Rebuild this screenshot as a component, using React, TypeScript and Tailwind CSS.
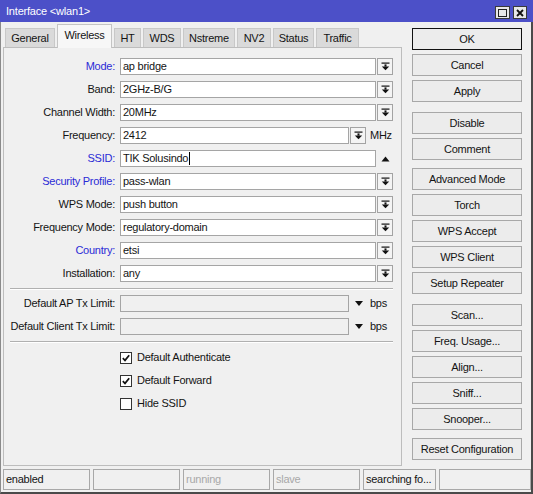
import React from 'react';

const blue = 'text-[#2b2bd6]';

const tabs: [string, number][] = [
    ['General', 50],
    ['Wireless', 55],
    ['HT', 27],
    ['WDS', 38],
    ['Nstreme', 52],
    ['NV2', 34],
    ['Status', 41],
    ['Traffic', 43],
];

function DropIcon() {
    return (
        <svg width="9" height="9" viewBox="0 0 9 9">
            <rect x="0.5" y="0.5" width="8" height="1.2" fill="#111" />
            <rect x="3.5" y="2.4" width="2" height="2.2" fill="#111" />
            <path d="M0.8 4.4H8.2L4.5 8.3Z" fill="#111" />
        </svg>
    );
}

function DropBtn() {
    return (
        <div className="ml-px w-[16px] h-[17px] border border-[#a3a3a3] bg-[#f4f4f4] flex items-center justify-center">
            <DropIcon />
        </div>
    );
}

function Row({ label, isBlue, children }: { label: string; isBlue?: boolean; children: React.ReactNode }) {
    return (
        <div className="flex items-center h-[17px]">
            <div className={`w-[112px] pr-px text-right whitespace-nowrap ${isBlue ? blue : ''}`}>{label}:</div>
            <div className="ml-[4px] flex items-center">{children}</div>
        </div>
    );
}

function Field({ value, w = 256, disabled, cursor }: { value?: string; w?: number; disabled?: boolean; cursor?: boolean }) {
    return (
        <div
            className={`h-[17px] border border-[#a5a5a5] pl-[2px] flex items-center whitespace-nowrap overflow-hidden ${disabled ? 'bg-[#f0f0f0]' : 'bg-white'}`}
            style={{ width: w }}
        >
            {value}
            {cursor && <span className="ml-px w-px h-[13px] bg-black" />}
        </div>
    );
}

function Check({ checked, label }: { checked?: boolean; label: string }) {
    return (
        <div className="flex items-center h-[17px] ml-[116px]">
            <div className="w-[12px] h-[12px] border border-[#333] bg-white flex items-center justify-center">
                {checked && (
                    <svg width="8" height="8" viewBox="0 0 8 8">
                        <path d="M0.8 4.2L3 6.4L7.2 1.2" stroke="#111" strokeWidth="1.7" fill="none" />
                    </svg>
                )}
            </div>
            <span className="ml-[5px]">{label}</span>
        </div>
    );
}

function Sep() {
    return <div className="ml-[6px] w-[383px] border-t border-[#b0b0b0] border-b border-b-white" />;
}

function Btn({ label, className = '', main }: { label: string; className?: string; main?: boolean }) {
    return (
        <div
            className={`w-[110px] h-[22px] flex items-center justify-center border bg-[#ececec] ${main ? 'border-[#111]' : 'border-[#a8a8a8]'} ${className}`}
        >
            {label}
        </div>
    );
}

export default function App() {
    return (
        <div className="w-[533px] h-[494px] flex flex-col bg-[#f0f0f0] text-[11px] tracking-[-0.25px] text-[#141414] font-['Liberation_Sans',Arial,sans-serif] leading-none">
            {/* Title bar */}
            <div className="h-[22px] bg-[#4c50c8] flex items-center pl-[6px] pr-[6px] text-white">
                <span className="tracking-[-0.2px]">Interface &lt;wlan1&gt;</span>
                <div className="ml-auto flex items-center gap-[3px] mt-[3px]">
                    <div className="w-[15px] h-[13px] bg-[#e8e8e8] border border-[#3a3a3a] flex items-center justify-center">
                        <div className="w-[9px] h-[8px] border border-[#222]" />
                    </div>
                    <div className="w-[14px] h-[13px] bg-[#e8e8e8] border border-[#3a3a3a] flex items-center justify-center">
                        <svg width="8" height="8" viewBox="0 0 8 8">
                            <path d="M1 1L7 7M7 1L1 7" stroke="#111" strokeWidth="1.8" />
                        </svg>
                    </div>
                </div>
            </div>

            <div className="flex-1 flex flex-col border-l border-l-[#8a8a8a] border-r-2 border-r-[#4a4a4a] border-b-2 border-b-[#4a4a4a]">
                <div className="flex h-[444px]">
                    {/* Left: tabs + panel */}
                    <div className="ml-[2px] w-[399px] flex flex-col">
                        <div className="h-[25px] flex items-end gap-[2px] pl-[2px] relative z-10">
                            {tabs.map(([t, w]) =>
                                t === 'Wireless' ? (
                                    <div
                                        key={t}
                                        className="h-[24px] -mb-px bg-[#f7f7f7] border border-b-0 border-[#c4c4c4] flex items-center justify-center pb-[2px]"
                                        style={{ width: w }}
                                    >
                                        {t}
                                    </div>
                                ) : (
                                    <div
                                        key={t}
                                        className="h-[19px] bg-[#dadada] border border-b-0 border-[#c8c8c8] flex items-center justify-center pt-px"
                                        style={{ width: w }}
                                    >
                                        {t}
                                    </div>
                                )
                            )}
                        </div>
                        <div className="h-[419px] border border-[#bdbdbd] bg-[#f0f0f0] pt-[10px] flex flex-col">
                            <div className="flex flex-col gap-[6px]">
                                <Row label="Mode" isBlue>
                                    <Field value="ap bridge" />
                                    <DropBtn />
                                </Row>
                                <Row label="Band">
                                    <Field value="2GHz-B/G" />
                                    <DropBtn />
                                </Row>
                                <Row label="Channel Width">
                                    <Field value="20MHz" />
                                    <DropBtn />
                                </Row>
                                <Row label="Frequency">
                                    <Field value="2412" w={229} />
                                    <DropBtn />
                                    <span className="ml-[4px]">MHz</span>
                                </Row>
                                <Row label="SSID" isBlue>
                                    <Field value="TIK Solusindo" cursor />
                                    <div className="ml-px w-[16px] h-[17px] flex items-center justify-center">
                                        <svg width="9" height="6" viewBox="0 0 9 6">
                                            <path d="M0.5 5.5H8.5L4.5 0.5Z" fill="#111" />
                                        </svg>
                                    </div>
                                </Row>
                                <Row label="Security Profile" isBlue>
                                    <Field value="pass-wlan" />
                                    <DropBtn />
                                </Row>
                                <Row label="WPS Mode">
                                    <Field value="push button" />
                                    <DropBtn />
                                </Row>
                                <Row label="Frequency Mode">
                                    <Field value="regulatory-domain" />
                                    <DropBtn />
                                </Row>
                                <Row label="Country" isBlue>
                                    <Field value="etsi" />
                                    <DropBtn />
                                </Row>
                                <Row label="Installation">
                                    <Field value="any" />
                                    <DropBtn />
                                </Row>
                            </div>

                            <div className="mt-[6px]">
                                <Sep />
                            </div>

                            <div className="mt-[5px] flex flex-col gap-[6px]">
                                {['Default AP Tx Limit', 'Default Client Tx Limit'].map((l) => (
                                    <Row key={l} label={l}>
                                        <Field w={229} disabled />
                                        <svg className="ml-[6px]" width="8" height="5" viewBox="0 0 8 5">
                                            <path d="M0 0H8L4 5Z" fill="#111" />
                                        </svg>
                                        <span className="ml-[7px]">bps</span>
                                    </Row>
                                ))}
                            </div>

                            <div className="mt-[6px]">
                                <Sep />
                            </div>

                            <div className="mt-[6px] flex flex-col gap-[6px]">
                                <Check checked label="Default Authenticate" />
                                <Check checked label="Default Forward" />
                                <Check label="Hide SSID" />
                            </div>
                        </div>
                    </div>

                    {/* Right: buttons */}
                    <div className="ml-[10px] pt-[6px] flex flex-col gap-[4px]">
                        <Btn label="OK" main />
                        <Btn label="Cancel" />
                        <Btn label="Apply" />
                        <Btn label="Disable" className="mt-[6px]" />
                        <Btn label="Comment" />
                        <Btn label="Advanced Mode" className="mt-[4px]" />
                        <Btn label="Torch" />
                        <Btn label="WPS Accept" />
                        <Btn label="WPS Client" />
                        <Btn label="Setup Repeater" />
                        <Btn label="Scan..." className="mt-[6px]" />
                        <Btn label="Freq. Usage..." />
                        <Btn label="Align..." />
                        <Btn label="Sniff..." />
                        <Btn label="Snooper..." />
                        <Btn label="Reset Configuration" className="mt-[4px]" />
                    </div>
                </div>

                {/* Status bar */}
                <div className="flex-1 flex items-start pt-[3px] pl-[2px] gap-[3px]">
                    {[
                        ['enabled', 87, false],
                        ['', 87, false],
                        ['running', 87, true],
                        ['slave', 87, true],
                        ['searching fo...', 73, false],
                        ['', 92, false],
                    ].map(([t, w, dim], i) => (
                        <div
                            key={i}
                            className={`h-[21px] border border-[#a8a8a8] flex items-center pl-[2px] whitespace-nowrap ${dim ? 'text-[#a8a8a8]' : ''}`}
                            style={{ width: w as number }}
                        >
                            {t as string}
                        </div>
                    ))}
                </div>
            </div>
        </div>
    );
}
